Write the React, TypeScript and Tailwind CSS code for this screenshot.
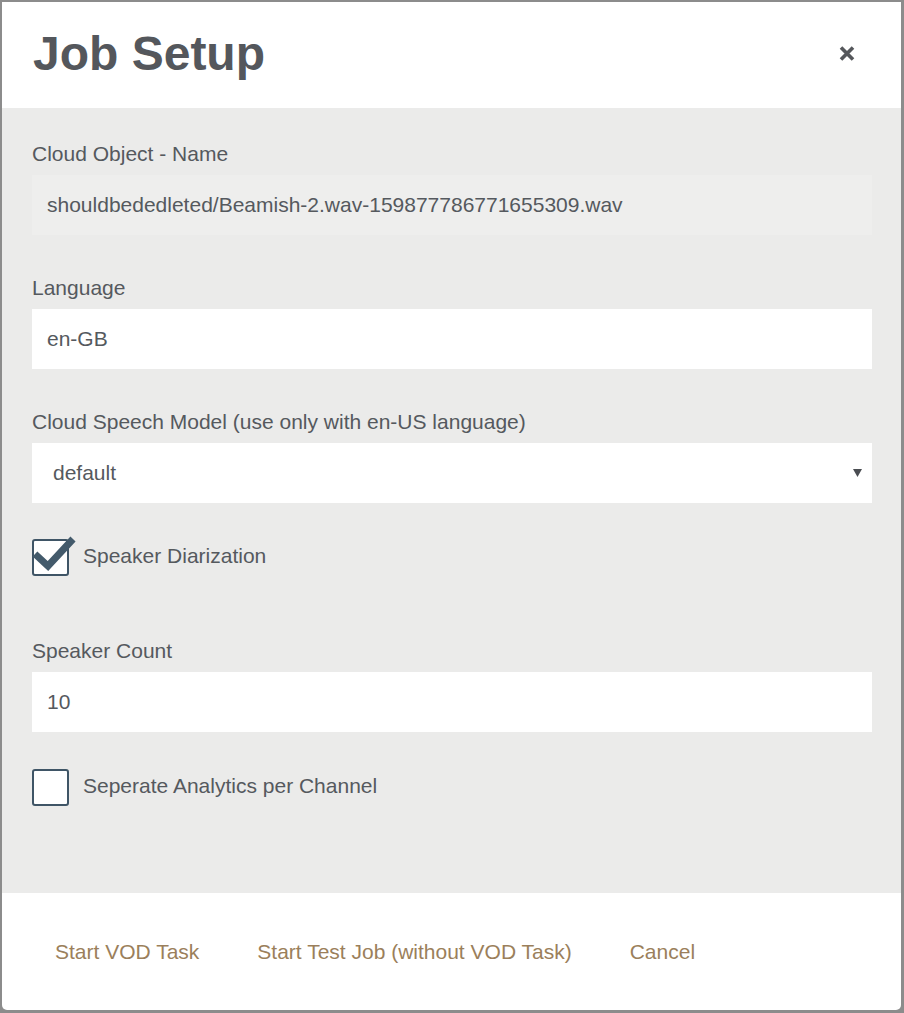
import React from "react";

const font = { fontFamily: '"Liberation Sans", Arial, sans-serif' };

function Label({ children }: { children: React.ReactNode }) {
  return <div className="h-[24px] leading-[24px] text-[21px] text-[#55595e] mb-[9px]">{children}</div>;
}

function Field({ value, disabled }: { value: string; disabled?: boolean }) {
  return (
    <div
      className={`h-[60px] flex items-center pl-[15px] text-[21px] text-[#55595e] ${disabled ? "bg-[#eeeeed]" : "bg-white"}`}
    >
      {value}
    </div>
  );
}

function Checkbox({ checked, label }: { checked?: boolean; label: string }) {
  return (
    <div className="flex items-center h-[37px]">
      <div className="relative w-[37px] h-[37px]">
        <div className="w-[37px] h-[37px] border-[2px] border-[#3f5566] rounded-[3px] bg-white" />
        {checked && (
          <svg className="absolute left-0 top-[-4px]" width="46" height="38" viewBox="0 0 46 38">
            <path d="M3 19 L16 31 L41 4" fill="none" stroke="#435a6b" strokeWidth="7" strokeLinejoin="miter" />
          </svg>
        )}
      </div>
      <span className="ml-[14px] text-[21px] text-[#55595e] leading-[24px] -mt-[4px]">{label}</span>
    </div>
  );
}

export default function App() {
  return (
    <div className="w-[904px] h-[1013px] bg-[#8c8c8c] pt-[2px] pl-[2px] pr-[3px] pb-[3px]" style={font}>
      <div className="h-full flex flex-col bg-white rounded-b-[5px] overflow-hidden">
        <div className="h-[106px] shrink-0 flex items-center justify-between pl-[31px] pr-[46px]">
          <h1 className="text-[48px] font-bold text-[#54575c] leading-none -mt-[3px]">Job Setup</h1>
          <svg width="16" height="15" viewBox="0 0 16 15" className="-mt-[4px]">
            <path d="M2 1.5 L14 13.5 M14 1.5 L2 13.5" stroke="#55575b" strokeWidth="3.6" strokeLinecap="butt" />
          </svg>
        </div>
        <div className="flex-1 bg-[#ebebea] pl-[30px] pr-[29px] pt-[34px]">
          <Label>Cloud Object - Name</Label>
          <Field value="shouldbededleted/Beamish-2.wav-159877786771655309.wav" disabled />
          <div className="h-[41px]" />
          <Label>Language</Label>
          <Field value="en-GB" />
          <div className="h-[41px]" />
          <Label>Cloud Speech Model (use only with en-US language)</Label>
          <div className="h-[60px] flex items-center justify-between pl-[21px] pr-[10px] bg-white text-[21px] text-[#55595e]">
            <span>default</span>
            <svg width="9" height="8" viewBox="0 0 9 8">
              <path d="M0 0 H9 L4.5 8 Z" fill="#4a4d52" />
            </svg>
          </div>
          <div className="h-[36px]" />
          <Checkbox checked label="Speaker Diarization" />
          <div className="h-[63px]" />
          <Label>Speaker Count</Label>
          <Field value="10" />
          <div className="h-[37px]" />
          <Checkbox label="Seperate Analytics per Channel" />
        </div>
        <div className="h-[117px] shrink-0 flex items-center pl-[53px] gap-[58px] text-[21px] text-[#9b7f5b]">
          <span>Start VOD Task</span>
          <span>Start Test Job (without VOD Task)</span>
          <span>Cancel</span>
        </div>
      </div>
    </div>
  );
}
